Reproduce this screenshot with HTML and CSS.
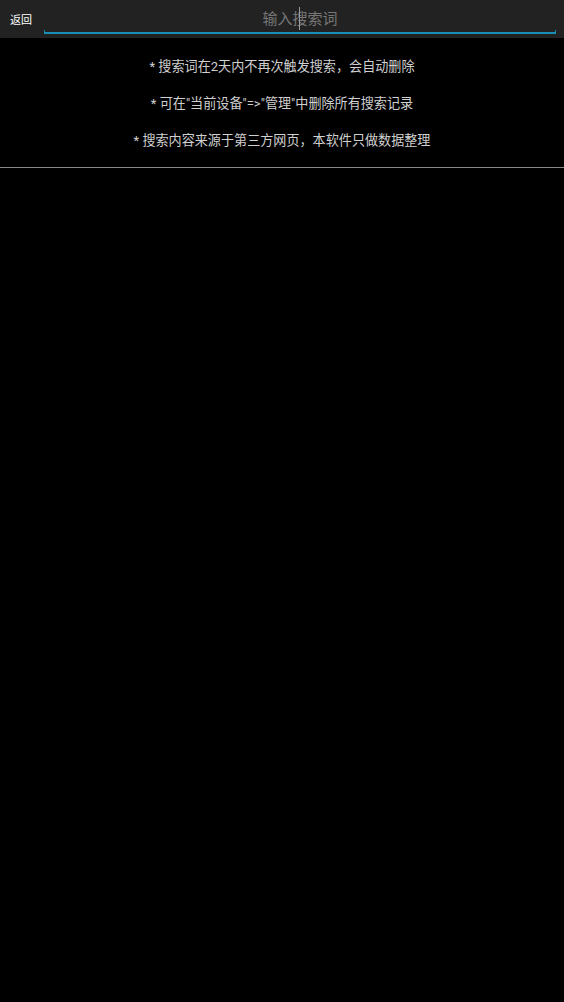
FILE: index.html
```html
<!DOCTYPE html>
<html lang="zh">
<head>
<meta charset="utf-8">
<link rel="stylesheet" href="styles.css">
</head>
<body>
<header class="topbar">
  <span class="back">返回</span>
  <div class="search">
    <span class="placeholder">输入搜索词</span>
    <span class="caret"></span>
  </div>
</header>
<section class="notes">
  <p>* 搜索词在2天内不再次触发搜索，会自动删除</p>
  <p>* 可在"当前设备"=>"管理"中删除所有搜索记录</p>
  <p>* 搜索内容来源于第三方网页，本软件只做数据整理</p>
</section>
<hr class="divider">
</body>
</html>
```
FILE: styles.css
```css
html, body {
  margin: 0;
  padding: 0;
  background: #000;
  height: 100%;
}
body {
  font-family: Roboto, "Noto Sans CJK SC", sans-serif;
  color: #d0d0d0;
}
.topbar {
  height: 38px;
  background: #222;
  display: flex;
  align-items: stretch;
}
.back {
  width: 44px;
  padding-left: 10px;
  box-sizing: border-box;
  font-size: 11px;
  color: #fff;
  display: flex;
  align-items: center;
}
.search {
  position: relative;
  width: 512px;
  height: 34px;
  border-bottom: 2px solid #1a8fb5;
  box-sizing: border-box;
  display: flex;
  justify-content: center;
  align-items: center;
}
.search::before,
.search::after {
  content: "";
  position: absolute;
  bottom: -2px;
  width: 1px;
  height: 4px;
  background: #1a8fb5;
}
.search::before { left: 0; }
.search::after { right: 0; }
.placeholder {
  font-size: 15px;
  color: #777;
  padding-top: 2px;
}
.caret {
  position: absolute;
  left: 255px;
  top: 7px;
  width: 1px;
  height: 23px;
  background: #999;
}
.notes {
  padding-top: 20px;
  text-align: center;
  display: flex;
  flex-direction: column;
  gap: 20px;
}
.notes p {
  margin: 0;
  font-size: 13.1px;
  line-height: 17px;
  color: #d0d0d0;
}
.divider {
  margin: 18px 0 0;
  border: 0;
  height: 1px;
  background: #888;
}
```
